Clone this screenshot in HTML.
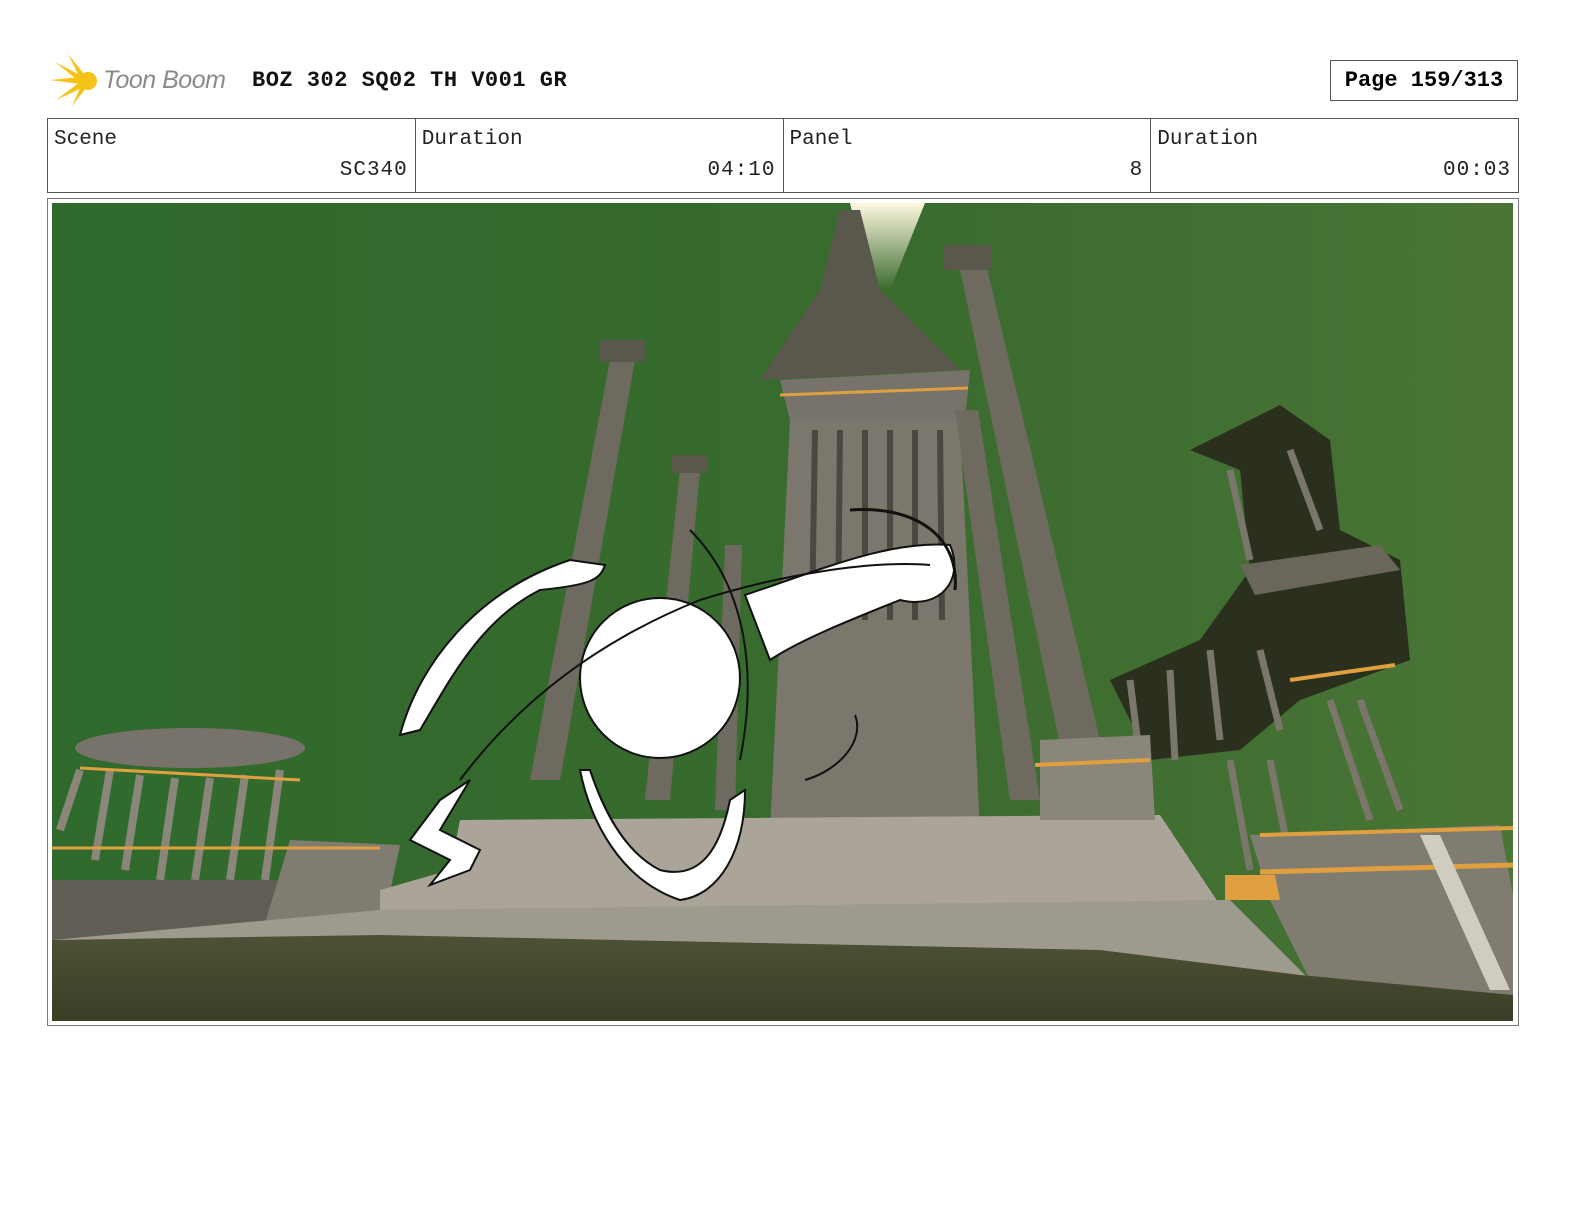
<!DOCTYPE html>
<html><head><meta charset="utf-8"><style>
html,body{margin:0;padding:0}
body{width:1584px;height:1224px;background:#fff;position:relative;overflow:hidden;font-family:"Liberation Mono",monospace;}
.abs{position:absolute}
.title{left:252px;top:68px;font-size:22px;font-weight:bold;color:#111;letter-spacing:0.5px}
.page{left:1330px;top:60px;width:188px;height:41px;border:1px solid #555;box-sizing:border-box;font-size:22px;font-weight:bold;text-align:center;line-height:39px}
table{position:absolute;left:47px;top:118px;width:1472px;height:75px;border-collapse:collapse}
td{border:1px solid #555;width:25%;vertical-align:top;padding:0;position:relative;font-size:21px;color:#222}
td .l{position:absolute;left:6px;top:9px}
td .r{position:absolute;right:7px;top:40px;letter-spacing:1px}
.frame{left:47px;top:198px;width:1472px;height:828px;border:1px solid #777;box-sizing:border-box}
</style></head><body>
<svg class="abs" style="left:50px;top:52px" width="55" height="55" viewBox="0 0 55 55">
<g fill="#f5c218"><polygon points="5,10 32,24 30,30"/><polygon points="0,28 30,25 30,32"/><polygon points="6,48 30,30 32,36"/><polygon points="18,2 34,22 29,24"/><polygon points="22,54 31,34 36,36"/><circle cx="38" cy="29" r="9"/></g></svg>
<div class="abs" style="left:103px;top:66px;font-family:'Liberation Sans',sans-serif;font-style:italic;font-size:25px;color:#8a8a8a;letter-spacing:-0.5px">Toon Boom</div>
<div class="abs title">BOZ 302 SQ02 TH V001 GR</div>
<div class="abs page">Page 159/313</div>
<table><tr>
<td><span class="l">Scene</span><span class="r">SC340</span></td>
<td><span class="l">Duration</span><span class="r">04:10</span></td>
<td><span class="l">Panel</span><span class="r">8</span></td>
<td><span class="l">Duration</span><span class="r">00:03</span></td>
</tr></table>
<div class="abs frame"></div>
<svg class="abs" style="left:52px;top:203px" width="1461" height="818" viewBox="52 203 1461 818">
<defs>
<linearGradient id="sky" x1="0" y1="0" x2="1" y2="0"><stop offset="0" stop-color="#2f6a2c"/><stop offset="0.6" stop-color="#3a6b2e"/><stop offset="1" stop-color="#4a7536"/></linearGradient>
<linearGradient id="beam" x1="0" y1="0" x2="0" y2="1"><stop offset="0" stop-color="#fff8e0"/><stop offset="1" stop-color="#fff8e0" stop-opacity="0"/></linearGradient>
<linearGradient id="grd" x1="0" y1="0" x2="0" y2="1"><stop offset="0" stop-color="#4d5236"/><stop offset="1" stop-color="#3a3e25"/></linearGradient>
</defs>
<rect x="52" y="203" width="1461" height="818" fill="url(#sky)"/>
<polygon points="850,203 925,203 890,290 870,290" fill="url(#beam)"/>
<polygon points="840,210 860,210 880,290 960,370 760,380 820,290" fill="#5a574d"/>
<polygon points="780,380 970,370 965,420 790,420" fill="#77736a"/>
<polygon points="790,420 960,420 980,830 770,830" fill="#7b776d"/>
<g stroke="#4a4840" stroke-width="6">
<line x1="815" y1="430" x2="812" y2="620"/><line x1="840" y1="430" x2="838" y2="620"/><line x1="865" y1="430" x2="865" y2="620"/><line x1="890" y1="430" x2="890" y2="620"/><line x1="915" y1="430" x2="915" y2="620"/><line x1="940" y1="430" x2="942" y2="620"/></g>
<line x1="780" y1="395" x2="968" y2="388" stroke="#e0a040" stroke-width="3"/>
<g fill="#6e6a60">
<polygon points="958,260 985,260 1100,740 1060,745"/>
<polygon points="955,410 978,410 1040,800 1010,800"/>
<polygon points="610,360 635,360 560,780 530,780"/>
<polygon points="680,470 700,470 670,800 645,800"/>
<polygon points="725,545 742,545 735,810 715,810"/>
</g>
<rect x="943" y="245" width="48" height="25" fill="#5a574d"/>
<rect x="600" y="340" width="45" height="22" fill="#5a574d"/>
<rect x="672" y="455" width="35" height="18" fill="#5a574d"/>
<path d="M1190,450 L1280,405 L1330,440 L1340,530 L1400,560 L1410,660 L1300,700 L1240,750 L1150,760 L1110,680 L1200,640 L1250,570 L1240,470 Z" fill="#2a2f1e"/>
<g stroke="#7a766b" stroke-width="7">
<line x1="1230" y1="470" x2="1250" y2="560"/><line x1="1290" y1="450" x2="1320" y2="530"/><line x1="1130" y1="680" x2="1140" y2="760"/><line x1="1170" y1="670" x2="1175" y2="760"/><line x1="1210" y1="650" x2="1220" y2="740"/><line x1="1260" y1="650" x2="1280" y2="730"/><line x1="1330" y1="700" x2="1370" y2="820"/><line x1="1360" y1="700" x2="1400" y2="810"/><line x1="1230" y1="760" x2="1250" y2="870"/><line x1="1270" y1="760" x2="1290" y2="860"/></g>
<path d="M1240,565 L1380,545 L1400,570 L1255,595 Z" fill="#6a665c"/>
<line x1="1290" y1="680" x2="1395" y2="665" stroke="#e0a040" stroke-width="4"/>
<ellipse cx="190" cy="748" rx="115" ry="20" fill="#77736a"/>
<g stroke="#8a867a" stroke-width="8"><line x1="80" y1="770" x2="60" y2="830"/><line x1="110" y1="770" x2="95" y2="860"/><line x1="140" y1="775" x2="125" y2="870"/><line x1="175" y1="778" x2="160" y2="880"/><line x1="210" y1="778" x2="195" y2="880"/><line x1="245" y1="775" x2="230" y2="880"/><line x1="280" y1="770" x2="265" y2="880"/></g>
<line x1="80" y1="768" x2="300" y2="780" stroke="#e0a040" stroke-width="3"/>
<polygon points="52,880 380,880 380,940 52,945" fill="#605d54"/>
<polygon points="290,840 400,845 380,940 260,940" fill="#807c72"/>
<polygon points="460,820 1160,815 1220,905 380,910 380,890 450,870" fill="#aaa598"/>
<polygon points="380,910 1230,900 1310,980 52,950 52,940" fill="#9f9a8e"/>
<polygon points="1040,740 1150,735 1155,820 1040,820" fill="#8a867a"/>
<line x1="1035" y1="765" x2="1150" y2="760" stroke="#e0a040" stroke-width="4"/>
<polygon points="1250,835 1500,825 1513,895 1513,1000 1310,980 1270,900" fill="#807c72"/>
<line x1="1260" y1="872" x2="1513" y2="865" stroke="#e0a040" stroke-width="5"/>
<line x1="1260" y1="835" x2="1513" y2="828" stroke="#e0a040" stroke-width="4"/>
<polygon points="1420,835 1440,835 1510,990 1490,990" fill="#d0ccc0"/>
<polygon points="1225,875 1275,875 1280,900 1225,900" fill="#e0a040"/>
<line x1="52" y1="848" x2="380" y2="848" stroke="#e0a040" stroke-width="3"/>
<polygon points="52,940 380,935 1100,950 1300,975 1513,995 1513,1021 52,1021" fill="url(#grd)"/>
<g fill="#fff" stroke="#111" stroke-width="2">
<circle cx="660" cy="678" r="80"/>
<path d="M400,735 C420,660 480,590 570,560 L605,565 C600,580 590,585 540,590 C480,620 450,680 420,730 Z"/>
<path d="M745,595 C820,570 890,540 950,545 C965,580 940,610 900,600 C850,620 800,640 770,660 Z"/>
<path d="M580,770 C590,820 620,880 680,900 C720,895 745,850 745,790 L730,800 C720,850 700,880 660,870 C620,850 600,800 590,770 Z"/>
<path d="M410,840 L440,800 L470,780 L440,830 L480,850 L470,870 L430,885 L450,860 Z"/>
</g>
<path d="M850,510 C920,505 960,540 955,590" fill="none" stroke="#111" stroke-width="3"/>
<path d="M690,530 C740,580 760,660 740,760" fill="none" stroke="#111" stroke-width="2"/>
<path d="M460,780 C520,700 600,640 700,600 C780,575 870,560 930,565" fill="none" stroke="#111" stroke-width="2"/>
<path d="M855,715 C865,740 840,770 805,780" fill="none" stroke="#111" stroke-width="2"/>
</svg>
</body></html>
